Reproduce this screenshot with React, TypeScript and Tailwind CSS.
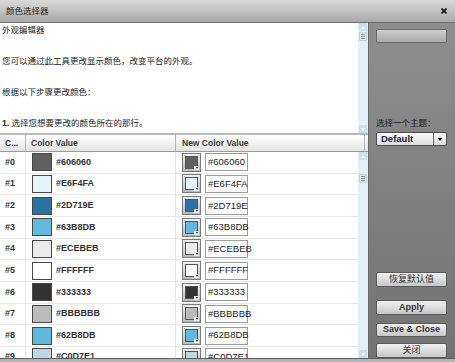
import React from 'react';

const rows = [
  '#606060',
  '#E6F4FA',
  '#2D719E',
  '#63B8DB',
  '#ECEBEB',
  '#FFFFFF',
  '#333333',
  '#BBBBBB',
  '#62B8DB',
  '#C0D7E1',
];

const ScrollBar: React.FC<{ grip: number }> = ({ grip }) => (
  <div className="w-[10px] h-full bg-[#e2eff8] flex flex-col justify-between relative">
    <div className="h-[8px] mx-[1px] bg-[#c9e0ef] flex items-center justify-center">
      <div className="w-0 h-0 border-l-[2px] border-r-[2px] border-b-[3px] border-l-transparent border-r-transparent border-b-white" />
    </div>
    <div className="h-[8px] mx-[1px] bg-[#c9e0ef] flex items-center justify-center">
      <div className="w-0 h-0 border-l-[2px] border-r-[2px] border-t-[3px] border-l-transparent border-r-transparent border-t-white" />
    </div>
    <div
      className="absolute left-[1px] w-[8px] h-[9px] bg-[#dde9f0] border border-[#c4d4de] flex flex-col justify-center gap-[1px] px-[1px]"
      style={{ top: grip }}
    >
      <div className="h-px bg-[#8a9298]" />
      <div className="h-px bg-[#8a9298]" />
      <div className="h-px bg-[#8a9298]" />
    </div>
  </div>
);

const SideButton: React.FC<{ label?: string; bold?: boolean; className?: string }> = ({ label, bold, className }) => (
  <div
    className={`w-[71px] h-[15px] rounded-[2px] border border-[#5a5a5a] bg-gradient-to-b from-[#f2f2f2] to-[#c6c6c6] flex items-center justify-center text-[9px] leading-none text-[#333] ${bold ? 'font-bold' : ''} ${className ?? ''}`}
  >
    {label}
  </div>
);

export default function App() {
  return (
    <div className="w-[455px] h-[362px] overflow-hidden flex flex-col bg-[#a6a6a6] font-['Liberation_Sans','Noto_Sans_CJK_SC',sans-serif]">
      {/* title bar */}
      <div className="h-[23px] shrink-0 bg-gradient-to-b from-[#dadada] to-[#a9a9a9] border-b border-[#6e6e6e] flex items-center justify-between pl-[6px] pr-[8px]">
        <span className="text-[8.5px] text-[#222] leading-none">颜色选择器</span>
        <svg width="6" height="6" viewBox="0 0 6 6">
          <path d="M0.5 0.5 L5.5 5.5 M5.5 0.5 L0.5 5.5" stroke="#111" strokeWidth="1.6" />
        </svg>
      </div>

      <div className="flex flex-row h-[335px] shrink-0">
        {/* left */}
        <div className="w-[368px] flex flex-col bg-white">
          <div className="h-[112px] shrink-0 flex border-b-2 border-[#b9b9b9]">
            <div className="flex-1 text-[8.5px] leading-[15.5px] text-[#222] pl-[2px]">
              <p>外观编辑器</p>
              <p>&nbsp;</p>
              <p>您可以通过此工具更改显示颜色，改变平台的外观。</p>
              <p>&nbsp;</p>
              <p>根据以下步骤更改颜色：</p>
              <p>&nbsp;</p>
              <p>
                <b>1.</b> 选择您想要更改的颜色所在的那行。
              </p>
            </div>
            <ScrollBar grip={9} />
          </div>

          {/* table header */}
          <div className="h-[17px] shrink-0 flex border-b border-[#9a9a9a] bg-gradient-to-b from-white to-[#e4e4e4] text-[8.5px] font-bold text-[#3a3a3a] leading-none">
            <div className="w-[26px] border-r border-[#b4b4b4] flex items-center pl-[5px]">C...</div>
            <div className="w-[150px] border-r border-[#b4b4b4] flex items-center pl-[5px]">Color Value</div>
            <div className="flex-1 border-r border-[#b4b4b4] flex items-center pl-[6px]">New Color Value</div>
            <div className="w-[3px]" />
          </div>

          {/* rows */}
          <div className="flex-1 flex overflow-hidden">
            <div className="flex-1 flex flex-col overflow-hidden">
              {rows.map((c, i) => (
                <div key={c} className="h-[21.67px] shrink-0 flex border-b border-[#e6e6e6] text-[#333]">
                  <div className="w-[26px] border-r border-[#e6e6e6] flex items-center pl-[5px] text-[9px] font-bold">#{i}</div>
                  <div className="w-[150px] border-r border-[#e6e6e6] flex items-center pl-[6px] gap-[4px]">
                    <div className="w-[20px] h-[18px] border border-[#474747]" style={{ backgroundColor: c }} />
                    <span className="text-[9px] font-bold">{c}</span>
                  </div>
                  <div className="flex-1 flex items-center pl-[6px] gap-[4px]">
                    <div className="w-[19px] h-[19px] border border-[#7a7a7a] bg-gradient-to-b from-[#f4f4f4] to-[#b9b9b9] relative">
                      <div className="absolute left-[2px] top-[2px] w-[13px] h-[13px] border border-[#555]" style={{ backgroundColor: c }} />
                      <div className="absolute right-[1px] bottom-[1px] w-[5px] h-[4px] bg-[#f2f2f2] flex items-center justify-center">
                        <div className="w-0 h-0 border-l-[1.5px] border-r-[1.5px] border-t-[2px] border-l-transparent border-r-transparent border-t-[#222]" />
                      </div>
                    </div>
                    <div className="w-[43px] h-[18px] border border-[#9c9c9c] bg-white flex items-center pl-[2px] text-[9.5px] text-[#1e1e1e]">
                      {c}
                    </div>
                  </div>
                </div>
              ))}
            </div>
            <ScrollBar grip={22} />
          </div>
        </div>

        {/* sidebar */}
        <div className="flex-1 border-l border-[#6a6a6a] bg-gradient-to-b from-[#8e8e8e] to-[#737373] flex flex-col pl-[7px]">
          <div className="mt-[6px] w-[71px] h-[14px] rounded-[2px] border border-[#6a6a6a] bg-gradient-to-b from-[#cdcdcd] to-[#a9a9a9]" />
          <div className="mt-[74px] text-[8.5px] leading-[12px] text-[#1a1a1a]">选择一个主题：</div>
          <div className="mt-[3px] w-[71px] h-[15px] rounded-[2px] border border-[#4e4e4e] bg-gradient-to-b from-[#fafafa] to-[#dedede] flex">
            <div className="flex-1 flex items-center pl-[4px] text-[9.5px] font-bold text-[#1c1c3c] leading-none">Default</div>
            <div className="w-[13px] border-l border-[#6a6a6a] flex items-center justify-center">
              <div className="w-0 h-0 border-l-[2.5px] border-r-[2.5px] border-t-[3px] border-l-transparent border-r-transparent border-t-[#222]" />
            </div>
          </div>
          <SideButton label="恢复默认值" className="mt-[126px]" />
          <SideButton label="Apply" bold className="mt-[13px]" />
          <SideButton label="Save & Close" bold className="mt-[8px]" />
          <SideButton label="关闭" className="mt-[6px]" />
        </div>
      </div>

      <div className="flex-1 border-t border-[#5f5f5f] bg-[#b4b4b4]" />
    </div>
  );
}
